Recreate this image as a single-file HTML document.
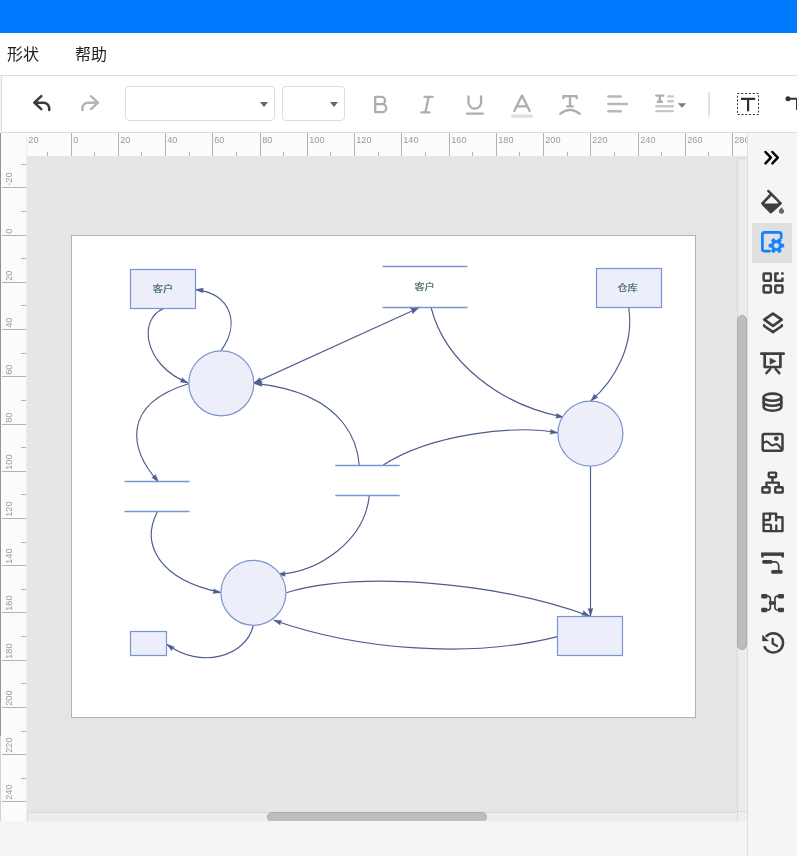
<!DOCTYPE html>
<html lang="zh-CN">
<head>
<meta charset="utf-8">
<title>流程图编辑器</title>
<style>
*{box-sizing:border-box;margin:0;padding:0}
html,body{width:797px;height:856px;overflow:hidden;background:#f5f5f5;font-family:"Liberation Sans","Noto Sans CJK SC",sans-serif}
#app{will-change:transform;position:relative;width:797px;height:856px;overflow:hidden;background:#f5f5f5}
#hdr{position:absolute;left:0;top:0;width:797px;height:33px;background:#007bff}
#menu{position:absolute;left:0;top:33px;width:797px;height:43px;background:#fff;border-bottom:1px solid #dcdcdc}
#menu span{position:absolute;top:9.5px;font-size:16px;line-height:24px;color:#1f1f1f;white-space:nowrap}
#tb{position:absolute;left:1px;top:76px;width:796px;height:57px;background:#fff;border-left:1px solid #dcdcdc;border-bottom:1px solid #dcdcdc}
.sel{position:absolute;top:86px;height:35px;border:1px solid #dcdcdc;border-radius:4px;background:#fff}
.sel i{position:absolute;top:14.5px;width:0;height:0;border-left:4px solid transparent;border-right:4px solid transparent;border-top:5px solid #666}
#tbi{position:absolute;left:0;top:76px;width:797px;height:57px}
#work{position:absolute;left:0;top:133px;width:747px;height:688px;background:#e5e5e5;overflow:hidden}
#hr{position:absolute;left:0;top:0;width:747px;height:23px;background:#fbfbfb;overflow:hidden}
#vr{position:absolute;left:0;top:0;width:27px;border-right:1px solid #f0f0f0;height:688px;background:#fbfbfb;border-left:1px solid #d4d4d4;overflow:hidden}
#vl{position:absolute;left:0;top:0;width:1px;height:603px;background:#939393}
#paper{position:absolute;left:71px;top:102px;width:625px;height:483px;background:#fff;border:1px solid #b3b3b3}
#vs{position:absolute;left:737px;top:25px;width:10px;height:654px;border-top:1px solid #d9d9d9;background:#ececec;border-left:1px solid #d9d9d9;border-bottom:1px solid #d9d9d9}
#cor{position:absolute;left:737px;top:679px;width:10px;height:9px;background:#efefef;border-left:1px solid #d9d9d9}
#vs b{position:absolute;left:-1px;top:156px;width:10px;height:335px;border-radius:5px;background:#bdbdbd;border:1px solid #ababab}
#hs{position:absolute;left:27px;top:679px;width:711px;height:9px;background:#ececec;border-top:1px solid #dadada;border-left:1px solid #dadada}
#hs b{position:absolute;left:239px;top:-1px;width:220px;height:10px;border-radius:5px;background:#bdbdbd;border:1px solid #ababab}
#side{position:absolute;left:747px;top:133px;width:50px;height:723px;background:#f5f5f5;border-left:1px solid #dedede}
#side .act{position:absolute;left:4px;top:90px;width:40px;height:40px;background:#e0e0e0}
svg{position:absolute;left:0;top:0;overflow:hidden}
svg text{font-family:"Liberation Sans","Noto Sans CJK SC",sans-serif}
</style>
</head>
<body>
<div id="app">
<div id="hdr"></div>
<div id="menu"><span style="left:7px">形状</span><span style="left:75px">帮助</span></div>
<div id="tb"></div>
<div class="sel" style="left:125px;width:150px"><i style="left:134px"></i></div>
<div class="sel" style="left:282px;width:63px"><i style="left:47px"></i></div>
<svg id="tbi" width="797" height="57" viewBox="0 76 797 57">

<g fill="none" stroke-linecap="round" stroke-linejoin="round">
<!-- undo -->
<path d="M41.3 96.2 L34.3 102.7 L41.3 109.2 M35 102.7 H43.6 a5.6 5.6 0 0 1 5.6 5.6 V110" stroke="#3b3b3b" stroke-width="2.5"/>
<!-- redo -->
<path d="M91 96.2 L98 102.7 L91 109.2 M97.3 102.7 H88 a5.6 5.6 0 0 0 -5.6 5.6 V110" stroke="#b4b4b4" stroke-width="2.4"/>
<!-- bold -->
<path d="M375.2 96.9 V112.2 M375.2 96.9 H381.4 a3.6 3.6 0 0 1 0 7.3 H375.2 M381.4 104.2 H382.2 a4 4 0 0 1 0 8 H375.2" stroke="#adadad" stroke-width="2.3"/>
<!-- italic -->
<path d="M424.6 96.9 H432.6 M421.4 112.4 H429.4 M428.7 96.9 L425.3 112.4" stroke="#adadad" stroke-width="2.3"/>
<!-- underline -->
<path d="M468.5 96.5 V102.3 a6.3 6.3 0 0 0 12.6 0 V96.5" stroke="#adadad" stroke-width="2.3"/>
<path d="M467 113.6 H483" stroke="#adadad" stroke-width="2.3"/>
<!-- font colour -->
<path d="M514.3 111 L522 95.6 L529.7 111 M517.2 106.4 H526.8" stroke="#adadad" stroke-width="2.3"/>
<path d="M512.7 116.1 H531.3" stroke="#dedede" stroke-width="3.3"/>
<!-- text on arc -->
<path d="M563.3 98.2 V96.2 H576.7 V98.2 M570 96.2 V106.3 M567.2 106.3 H572.8" stroke="#adadad" stroke-width="2.3"/>
<path d="M560.2 113.8 Q570 106 579.8 113.8" stroke="#adadad" stroke-width="2.2"/>
<!-- align -->
<path d="M608.3 96.5 H620.7 M608.3 103.9 H627 M608.3 111.3 H620.7" stroke="#b9b9b9" stroke-width="2.5"/>
<!-- text layout -->
<path d="M656.3 95.6 H663.3 M659.8 95.6 V101.6 M657.8 101.8 H661.8" stroke="#adadad" stroke-width="2.4"/>
<path d="M668.4 96.4 H672.8 M668.4 101.3 H672.8 M656.3 106.3 H672.8 M656.3 111.1 H672.8" stroke="#c6c6c6" stroke-width="2.4"/>
<!-- text box -->
<rect x="737.5" y="93.5" width="21" height="21" stroke="#333" stroke-width="1" stroke-dasharray="2 1.8" stroke-linecap="butt"/>
<path d="M741 98.9 H755.2 M748.1 98.9 V111.2" stroke="#2f2f2f" stroke-width="2.2" stroke-linecap="butt"/>
<!-- connector -->
<path d="M788 98.8 H797 M797 98.8 V110" stroke="#333" stroke-width="2" stroke-linecap="butt"/>
</g>
<circle cx="788" cy="98.8" r="2.5" fill="#333"/>
<path d="M677.8 103.2 H686.2 L682 107.8 Z" fill="#7b7b7b"/>
<rect x="708.3" y="92" width="1.6" height="24.5" fill="#dcdcdc"/>

</svg>
<div id="work">
<div id="paper"></div>
<svg id="dia" width="747" height="688" viewBox="0 133 747 688">
<path d="M419.2 307.2 L412.7 313.8 L412.2 310.4 L410.0 307.8 Z" fill="#4c5c8c" stroke="#4c5c8c" stroke-width="0.5" stroke-linejoin="round"/>
<path d="M163.3 308.6 C137.6 319.6 143.9 365.4 188.1 383" fill="none" stroke="#4c5c8c" stroke-width="1.15"/>
<path d="M188.1 383.0 L180.2 382.0 L181.9 380.2 L182.1 377.8 Z" fill="#4c5c8c" stroke="#4c5c8c" stroke-width="0.5" stroke-linejoin="round"/>
<path d="M221.1 350.6 C240.5 323.8 231.4 293.9 195.6 289.6" fill="none" stroke="#4c5c8c" stroke-width="1.15"/>
<path d="M195.6 289.6 L203.4 288.2 L202.4 290.4 L202.9 292.8 Z" fill="#4c5c8c" stroke="#4c5c8c" stroke-width="0.5" stroke-linejoin="round"/>
<path d="M418.5 308 L254 383" fill="none" stroke="#4c5c8c" stroke-width="1.15"/>
<path d="M254.0 383.0 L260.0 377.8 L260.2 380.2 L261.9 381.9 Z" fill="#4c5c8c" stroke="#4c5c8c" stroke-width="0.5" stroke-linejoin="round"/>
<path d="M431.2 308 C445 362 500 405 563.6 417.2" fill="none" stroke="#4c5c8c" stroke-width="1.15"/>
<path d="M563.6 417.2 L555.7 418.1 L556.9 416.0 L556.5 413.6 Z" fill="#4c5c8c" stroke="#4c5c8c" stroke-width="0.5" stroke-linejoin="round"/>
<path d="M628.7 308 C634.5 345 615 380 590.8 401" fill="none" stroke="#4c5c8c" stroke-width="1.15"/>
<path d="M590.8 401.0 L594.5 394.0 L595.6 396.2 L597.8 397.3 Z" fill="#4c5c8c" stroke="#4c5c8c" stroke-width="0.5" stroke-linejoin="round"/>
<path d="M383.3 465 C433.5 432.7 518.7 425.1 557.8 432.8" fill="none" stroke="#4c5c8c" stroke-width="1.15"/>
<path d="M557.8 432.8 L550.0 434.0 L551.0 431.8 L550.6 429.5 Z" fill="#4c5c8c" stroke="#4c5c8c" stroke-width="0.5" stroke-linejoin="round"/>
<path d="M359.2 465 C358.3 453 353.2 393.5 254.5 383.4" fill="none" stroke="#4c5c8c" stroke-width="1.15"/>
<path d="M254.5 383.4 L262.3 381.8 L261.3 384.0 L261.9 386.4 Z" fill="#4c5c8c" stroke="#4c5c8c" stroke-width="0.5" stroke-linejoin="round"/>
<path d="M188.5 383.8 C120 405 130 450 158.4 481.8" fill="none" stroke="#4c5c8c" stroke-width="1.15"/>
<path d="M158.4 481.8 L151.8 477.5 L154.0 476.6 L155.3 474.5 Z" fill="#4c5c8c" stroke="#4c5c8c" stroke-width="0.5" stroke-linejoin="round"/>
<path d="M157.5 511.6 C140 545 160 580 220.8 592.5" fill="none" stroke="#4c5c8c" stroke-width="1.15"/>
<path d="M220.8 592.5 L212.9 593.4 L214.1 591.3 L213.7 588.9 Z" fill="#4c5c8c" stroke="#4c5c8c" stroke-width="0.5" stroke-linejoin="round"/>
<path d="M369.3 495.4 C365 540 320 572 277.6 574.3" fill="none" stroke="#4c5c8c" stroke-width="1.15"/>
<path d="M277.6 574.3 L285.1 571.7 L284.4 574.1 L285.3 576.3 Z" fill="#4c5c8c" stroke="#4c5c8c" stroke-width="0.5" stroke-linejoin="round"/>
<path d="M253.3 625.5 C246 657 200 669.5 166.8 644.3" fill="none" stroke="#4c5c8c" stroke-width="1.15"/>
<path d="M166.8 644.3 L174.3 646.9 L172.3 648.3 L171.6 650.6 Z" fill="#4c5c8c" stroke="#4c5c8c" stroke-width="0.5" stroke-linejoin="round"/>
<path d="M286.2 592.7 C357.7 570.9 493.2 581.2 589.5 616" fill="none" stroke="#4c5c8c" stroke-width="1.15"/>
<path d="M589.5 616.0 L581.6 615.0 L583.3 613.2 L583.5 610.8 Z" fill="#4c5c8c" stroke="#4c5c8c" stroke-width="0.5" stroke-linejoin="round"/>
<path d="M557.5 636.6 C466.4 659.7 354.2 648.5 273.8 620.2" fill="none" stroke="#4c5c8c" stroke-width="1.15"/>
<path d="M273.8 620.2 L281.7 620.6 L280.2 622.5 L280.2 624.9 Z" fill="#4c5c8c" stroke="#4c5c8c" stroke-width="0.5" stroke-linejoin="round"/>
<path d="M590.5 466.4 L590.5 616" fill="none" stroke="#4c5c8c" stroke-width="1.15"/>
<path d="M590.5 616.0 L588.2 608.4 L590.5 609.2 L592.8 608.4 Z" fill="#4c5c8c" stroke="#4c5c8c" stroke-width="0.5" stroke-linejoin="round"/>
<g fill="#eceff9" stroke="#7c93d1" stroke-width="1.2">
<rect x="130.5" y="269.5" width="65" height="39"/>
<rect x="596.5" y="268.5" width="65" height="39"/>
<rect x="130.5" y="631.5" width="36" height="24"/>
<rect x="557.5" y="616.5" width="65" height="39"/>
<circle cx="221.3" cy="383.3" r="32.5"/>
<circle cx="590.4" cy="433.6" r="32.5"/>
<circle cx="253.4" cy="592.8" r="32.5"/>
</g>
<g fill="none" stroke="#7c93d1" stroke-width="1.3">
<path d="M382.5 266.5 H467.5 M382.5 307.5 H467.5"/>
<path d="M124.5 481.5 H189.5 M124.5 511.5 H189.5"/>
<path d="M335.3 465.5 H399.7 M335.3 495.5 H399.7"/>
</g>
<g font-size="10" fill="#3b6262" stroke="#3b6262" stroke-width="0.2" text-anchor="middle">
<text transform="translate(163 288.9) scale(1.02 0.86)" y="3.8">客户</text>
<text transform="translate(424.6 286.9) scale(1.02 0.86)" y="3.8">客户</text>
<text transform="translate(627.6 287.6) scale(1.02 0.86)" y="3.8">仓库</text>
</g>

</svg>
<div id="hr"><svg width="747" height="23" viewBox="0 133 747 23">
<line x1="23.5" y1="133" x2="23.5" y2="156" stroke="#b2b2b2"/>
<text transform="translate(25.3,143.2) scale(0.96,1)" font-size="9.5" fill="#999999">-20</text>
<line x1="47.5" y1="152" x2="47.5" y2="156" stroke="#b2b2b2"/>
<line x1="71.5" y1="133" x2="71.5" y2="156" stroke="#b2b2b2"/>
<text transform="translate(73.3,143.2) scale(0.96,1)" font-size="9.5" fill="#999999">0</text>
<line x1="94.5" y1="152" x2="94.5" y2="156" stroke="#b2b2b2"/>
<line x1="118.5" y1="133" x2="118.5" y2="156" stroke="#b2b2b2"/>
<text transform="translate(120.3,143.2) scale(0.96,1)" font-size="9.5" fill="#999999">20</text>
<line x1="141.5" y1="152" x2="141.5" y2="156" stroke="#b2b2b2"/>
<line x1="165.5" y1="133" x2="165.5" y2="156" stroke="#b2b2b2"/>
<text transform="translate(167.3,143.2) scale(0.96,1)" font-size="9.5" fill="#999999">40</text>
<line x1="189.5" y1="152" x2="189.5" y2="156" stroke="#b2b2b2"/>
<line x1="212.5" y1="133" x2="212.5" y2="156" stroke="#b2b2b2"/>
<text transform="translate(214.3,143.2) scale(0.96,1)" font-size="9.5" fill="#999999">60</text>
<line x1="236.5" y1="152" x2="236.5" y2="156" stroke="#b2b2b2"/>
<line x1="260.5" y1="133" x2="260.5" y2="156" stroke="#b2b2b2"/>
<text transform="translate(262.3,143.2) scale(0.96,1)" font-size="9.5" fill="#999999">80</text>
<line x1="283.5" y1="152" x2="283.5" y2="156" stroke="#b2b2b2"/>
<line x1="307.5" y1="133" x2="307.5" y2="156" stroke="#b2b2b2"/>
<text transform="translate(309.3,143.2) scale(0.96,1)" font-size="9.5" fill="#999999">100</text>
<line x1="330.5" y1="152" x2="330.5" y2="156" stroke="#b2b2b2"/>
<line x1="354.5" y1="133" x2="354.5" y2="156" stroke="#b2b2b2"/>
<text transform="translate(356.3,143.2) scale(0.96,1)" font-size="9.5" fill="#999999">120</text>
<line x1="378.5" y1="152" x2="378.5" y2="156" stroke="#b2b2b2"/>
<line x1="401.5" y1="133" x2="401.5" y2="156" stroke="#b2b2b2"/>
<text transform="translate(403.3,143.2) scale(0.96,1)" font-size="9.5" fill="#999999">140</text>
<line x1="425.5" y1="152" x2="425.5" y2="156" stroke="#b2b2b2"/>
<line x1="449.5" y1="133" x2="449.5" y2="156" stroke="#b2b2b2"/>
<text transform="translate(451.3,143.2) scale(0.96,1)" font-size="9.5" fill="#999999">160</text>
<line x1="472.5" y1="152" x2="472.5" y2="156" stroke="#b2b2b2"/>
<line x1="496.5" y1="133" x2="496.5" y2="156" stroke="#b2b2b2"/>
<text transform="translate(498.3,143.2) scale(0.96,1)" font-size="9.5" fill="#999999">180</text>
<line x1="519.5" y1="152" x2="519.5" y2="156" stroke="#b2b2b2"/>
<line x1="543.5" y1="133" x2="543.5" y2="156" stroke="#b2b2b2"/>
<text transform="translate(545.3,143.2) scale(0.96,1)" font-size="9.5" fill="#999999">200</text>
<line x1="567.5" y1="152" x2="567.5" y2="156" stroke="#b2b2b2"/>
<line x1="590.5" y1="133" x2="590.5" y2="156" stroke="#b2b2b2"/>
<text transform="translate(592.3,143.2) scale(0.96,1)" font-size="9.5" fill="#999999">220</text>
<line x1="614.5" y1="152" x2="614.5" y2="156" stroke="#b2b2b2"/>
<line x1="638.5" y1="133" x2="638.5" y2="156" stroke="#b2b2b2"/>
<text transform="translate(640.3,143.2) scale(0.96,1)" font-size="9.5" fill="#999999">240</text>
<line x1="661.5" y1="152" x2="661.5" y2="156" stroke="#b2b2b2"/>
<line x1="685.5" y1="133" x2="685.5" y2="156" stroke="#b2b2b2"/>
<text transform="translate(687.3,143.2) scale(0.96,1)" font-size="9.5" fill="#999999">260</text>
<line x1="708.5" y1="152" x2="708.5" y2="156" stroke="#b2b2b2"/>
<line x1="732.5" y1="133" x2="732.5" y2="156" stroke="#b2b2b2"/>
<text transform="translate(734.3,143.2) scale(0.96,1)" font-size="9.5" fill="#999999">280</text>
<line x1="756.5" y1="152" x2="756.5" y2="156" stroke="#b2b2b2"/>
<line x1="779.5" y1="133" x2="779.5" y2="156" stroke="#b2b2b2"/>
<text transform="translate(781.3,143.2) scale(0.96,1)" font-size="9.5" fill="#999999">300</text>
<line x1="803.5" y1="152" x2="803.5" y2="156" stroke="#b2b2b2"/>
</svg></div>
<div id="vr"><svg style="left:-1px" width="27" height="688" viewBox="0 133 27 688">
<line x1="21" y1="164.5" x2="26" y2="164.5" stroke="#b2b2b2"/>
<line x1="2" y1="187.5" x2="26" y2="187.5" stroke="#b2b2b2"/>
<text transform="translate(11.8,185.7) rotate(-90) scale(0.96,1)" font-size="9.5" fill="#999999">-20</text>
<line x1="21" y1="211.5" x2="26" y2="211.5" stroke="#b2b2b2"/>
<line x1="2" y1="235.5" x2="26" y2="235.5" stroke="#b2b2b2"/>
<text transform="translate(11.8,233.7) rotate(-90) scale(0.96,1)" font-size="9.5" fill="#999999">0</text>
<line x1="21" y1="258.5" x2="26" y2="258.5" stroke="#b2b2b2"/>
<line x1="2" y1="282.5" x2="26" y2="282.5" stroke="#b2b2b2"/>
<text transform="translate(11.8,280.7) rotate(-90) scale(0.96,1)" font-size="9.5" fill="#999999">20</text>
<line x1="21" y1="305.5" x2="26" y2="305.5" stroke="#b2b2b2"/>
<line x1="2" y1="329.5" x2="26" y2="329.5" stroke="#b2b2b2"/>
<text transform="translate(11.8,327.7) rotate(-90) scale(0.96,1)" font-size="9.5" fill="#999999">40</text>
<line x1="21" y1="353.5" x2="26" y2="353.5" stroke="#b2b2b2"/>
<line x1="2" y1="376.5" x2="26" y2="376.5" stroke="#b2b2b2"/>
<text transform="translate(11.8,374.7) rotate(-90) scale(0.96,1)" font-size="9.5" fill="#999999">60</text>
<line x1="21" y1="400.5" x2="26" y2="400.5" stroke="#b2b2b2"/>
<line x1="2" y1="424.5" x2="26" y2="424.5" stroke="#b2b2b2"/>
<text transform="translate(11.8,422.7) rotate(-90) scale(0.96,1)" font-size="9.5" fill="#999999">80</text>
<line x1="21" y1="447.5" x2="26" y2="447.5" stroke="#b2b2b2"/>
<line x1="2" y1="471.5" x2="26" y2="471.5" stroke="#b2b2b2"/>
<text transform="translate(11.8,469.7) rotate(-90) scale(0.96,1)" font-size="9.5" fill="#999999">100</text>
<line x1="21" y1="494.5" x2="26" y2="494.5" stroke="#b2b2b2"/>
<line x1="2" y1="518.5" x2="26" y2="518.5" stroke="#b2b2b2"/>
<text transform="translate(11.8,516.7) rotate(-90) scale(0.96,1)" font-size="9.5" fill="#999999">120</text>
<line x1="21" y1="542.5" x2="26" y2="542.5" stroke="#b2b2b2"/>
<line x1="2" y1="565.5" x2="26" y2="565.5" stroke="#b2b2b2"/>
<text transform="translate(11.8,563.7) rotate(-90) scale(0.96,1)" font-size="9.5" fill="#999999">140</text>
<line x1="21" y1="589.5" x2="26" y2="589.5" stroke="#b2b2b2"/>
<line x1="2" y1="612.5" x2="26" y2="612.5" stroke="#b2b2b2"/>
<text transform="translate(11.8,610.7) rotate(-90) scale(0.96,1)" font-size="9.5" fill="#999999">160</text>
<line x1="21" y1="636.5" x2="26" y2="636.5" stroke="#b2b2b2"/>
<line x1="2" y1="660.5" x2="26" y2="660.5" stroke="#b2b2b2"/>
<text transform="translate(11.8,658.7) rotate(-90) scale(0.96,1)" font-size="9.5" fill="#999999">180</text>
<line x1="21" y1="683.5" x2="26" y2="683.5" stroke="#b2b2b2"/>
<line x1="2" y1="707.5" x2="26" y2="707.5" stroke="#b2b2b2"/>
<text transform="translate(11.8,705.7) rotate(-90) scale(0.96,1)" font-size="9.5" fill="#999999">200</text>
<line x1="21" y1="731.5" x2="26" y2="731.5" stroke="#b2b2b2"/>
<line x1="2" y1="754.5" x2="26" y2="754.5" stroke="#b2b2b2"/>
<text transform="translate(11.8,752.7) rotate(-90) scale(0.96,1)" font-size="9.5" fill="#999999">220</text>
<line x1="21" y1="778.5" x2="26" y2="778.5" stroke="#b2b2b2"/>
<line x1="2" y1="801.5" x2="26" y2="801.5" stroke="#b2b2b2"/>
<text transform="translate(11.8,799.7) rotate(-90) scale(0.96,1)" font-size="9.5" fill="#999999">240</text>
<line x1="21" y1="825.5" x2="26" y2="825.5" stroke="#b2b2b2"/>
<line x1="2" y1="849.5" x2="26" y2="849.5" stroke="#b2b2b2"/>
<text transform="translate(11.8,847.7) rotate(-90) scale(0.96,1)" font-size="9.5" fill="#999999">260</text>
<line x1="21" y1="872.5" x2="26" y2="872.5" stroke="#b2b2b2"/>
</svg></div>
<div id="vl"></div>
<div id="vs"><b></b></div>
<div id="hs"><b></b></div>
<div id="cor"></div>
</div>
<div id="side"><div class="act"></div>
<svg id="sic" style="left:-1px" width="50" height="723" viewBox="747 133 50 723">

<g fill="none" stroke-linecap="round" stroke-linejoin="round">
<!-- collapse chevrons -->
<path d="M765.5 152 L770.9 157.7 L765.5 163.3 M772.4 152 L777.8 157.7 L772.4 163.3" stroke="#000" stroke-width="2.5" stroke-linejoin="round"/>
<!-- paint bucket -->
<path d="M770.3 195.2 L762.5 203.4 L770.9 212 L780.2 203.2" stroke="#3f3f3f" stroke-width="2.7"/>
<path d="M768.3 190.9 L780.6 203.4" stroke="#3f3f3f" stroke-width="2.4" stroke-linecap="round"/>
<path d="M763.2 204.7 H779.4 L770.9 212 Z" fill="#3f3f3f" stroke="#3f3f3f" stroke-width="2.2"/>
<!-- style (active) -->
<path d="M781.2 237.8 V234.6 a2.2 2.2 0 0 0 -2.2 -2.2 H764.6 a2.2 2.2 0 0 0 -2.2 2.2 V248.9 a2.2 2.2 0 0 0 2.2 2.2 H769.6" stroke="#0f80ff" stroke-width="2.7"/>
<!-- grid -->
<g stroke="#3f3f3f" stroke-width="2.5">
<rect x="763.65" y="273.45" width="7.2" height="7.2" rx="0.9"/>
<rect x="763.65" y="285.5" width="7.2" height="7" rx="0.9"/>
<rect x="775.35" y="285.5" width="7.1" height="7" rx="0.9"/>
<path d="M778.8 273.45 H775.35 V280.65 H782.45 V277.6" stroke-linecap="butt"/>
</g>
<!-- layers -->
<path d="M773 313.6 L764.3 319.7 L773 325.8 L781.7 319.7 Z" stroke="#3f3f3f" stroke-width="2.7"/>
<path d="M764.2 325.4 V326 L773 332.1 L781.8 326 V325.4" stroke="#3f3f3f" stroke-width="2.6"/>
<!-- presentation -->
<path d="M761.3 353.7 H783.7" stroke="#3f3f3f" stroke-width="2.7"/>
<path d="M764.7 354 V367 H780.4 V354" stroke="#3f3f3f" stroke-width="2.7"/>
<path d="M770.2 369 L766.4 373.2 M775.6 369 L779.3 373.2" stroke="#3f3f3f" stroke-width="2.5"/>
<!-- database -->
<g stroke="#3f3f3f" stroke-width="2.6">
<ellipse cx="772.5" cy="397.2" rx="8.8" ry="3.6"/>
<path d="M763.7 397.2 V407.1 a8.8 3.6 0 0 0 17.6 0 V397.2"/>
<path d="M763.7 402.2 a8.8 3.6 0 0 0 17.6 0"/>
</g>
<!-- image -->
<rect x="762.7" y="433.9" width="19.8" height="16.8" rx="1.8" stroke="#3f3f3f" stroke-width="2.5"/>
<path d="M763.4 443 Q766.8 440 769.6 443.6 Q772 446.6 775.2 444.4 Q777.6 443 781.8 449.6" stroke="#3f3f3f" stroke-width="2.1"/>
<!-- org chart -->
<g stroke="#3f3f3f" stroke-width="2.4" stroke-linejoin="round">
<rect x="768.8" y="472.6" width="7.3" height="4.6" rx="0.6"/>
<rect x="762.4" y="487.2" width="7.2" height="5.3" rx="0.6"/>
<rect x="775.2" y="487.2" width="7.5" height="5.3" rx="0.6"/>
<path d="M772.5 478 V482.6 M766.5 485.8 V482.6 H778.7 V485.8" stroke-width="2.4"/>
</g>
<!-- connector -->
<path d="M762.4 557.6 V554.1 H782.7 V557.6" stroke="#3f3f3f" stroke-width="2.4" stroke-linejoin="miter" stroke-linecap="butt"/>
<path d="M761.2 554.1 H783.9" stroke="#3f3f3f" stroke-width="3.4" stroke-linecap="butt"/>
<path d="M770 561.9 H774.9 a3.8 3.8 0 0 1 3.8 3.8 V571" stroke="#3f3f3f" stroke-width="1.7"/>
<!-- graph -->
<path d="M766 596.2 H767.8 a2.6 2.6 0 0 1 2.6 2.6 V603 M779 596.2 H777.5 a2.6 2.6 0 0 0 -2.6 2.6 V603 M766 610 H767.8 a2.6 2.6 0 0 0 2.6 -2.6 V603 M779 610 H777.5 a2.6 2.6 0 0 1 -2.6 -2.6 V603" stroke="#3f3f3f" stroke-width="1.7"/>
<!-- history -->
<path d="M764.2 646.1 A9.7 9.7 0 1 0 765.9 636.6" stroke="#3f3f3f" stroke-width="2.5" stroke-linecap="butt"/>
<path d="M772.7 638.9 V643.6 L777 646" stroke="#3f3f3f" stroke-width="2.3"/>
</g>
<path d="M781.5 207.2 C782.6 208.6 784.1 210 784.1 211.1 a2.6 2.6 0 0 1 -5.2 0 C778.9 210 780.4 208.6 781.5 207.2 Z" fill="#666"/>
<path d="M781.25 244.02 L783.75 244.12 L783.75 247.08 L781.25 247.18 L780.19 249.01 L781.36 251.23 L778.79 252.71 L777.46 250.59 L775.34 250.59 L774.01 252.71 L771.44 251.23 L772.61 249.01 L771.55 247.18 L769.05 247.08 L769.05 244.12 L771.55 244.02 L772.61 242.19 L771.44 239.97 L774.01 238.49 L775.34 240.61 L777.46 240.61 L778.79 238.49 L781.36 239.97 L780.19 242.19 Z M773.50 245.60 a2.9 2.9 0 1 0 5.8 0 a2.9 2.9 0 1 0 -5.8 0 Z" fill="#0f80ff" fill-rule="evenodd" stroke="#0f80ff" stroke-width="0.7" stroke-linejoin="round"/>
<rect x="781.1" y="272.3" width="2.6" height="2.4" rx="0.4" fill="#3f3f3f"/>
<path d="M770 358.2 V364.2 L776.2 361.2 Z" fill="#3f3f3f" stroke="#3f3f3f" stroke-width="0.6" stroke-linejoin="round"/>
<circle cx="776.3" cy="438.6" r="2.4" fill="#3f3f3f"/>
<path d="M762.5 635 V640.9 H768.4 Z" fill="#3f3f3f" stroke="#3f3f3f" stroke-width="0.5" stroke-linejoin="round"/>
<!-- floor plan -->
<g fill="none" stroke="#3f3f3f" stroke-width="2.4" stroke-linejoin="round" stroke-linecap="round">
<path d="M763.6 513.6 H776.1 V517.2 H782.5 V531.1 H763.6 Z"/>
<path d="M770 513.6 V519 a1 1 0 0 1 -1 1 H763.6 M776.1 517.2 V520.6 M763.6 524.7 H770 a1 1 0 0 1 1 1 V531.1 M776.3 525.4 V531.1" stroke-width="2.3"/>
</g>
<!-- node blocks -->
<g fill="#3f3f3f">
<rect x="762.3" y="560.1" width="10" height="3.7" rx="1.2"/>
<rect x="771.3" y="570.1" width="11.2" height="3.7" rx="1.2"/>
<rect x="761.2" y="594.1" width="6.2" height="4.3" rx="1.1"/>
<rect x="777.9" y="594.1" width="6.1" height="4.3" rx="1.1"/>
<rect x="761.2" y="607.8" width="6.2" height="4.4" rx="1.1"/>
<rect x="777.9" y="607.8" width="6.1" height="4.4" rx="1.1"/>
<rect x="768.9" y="601.3" width="7" height="3.5" rx="1"/>
</g>

</svg>
</div>
</div>
</body>
</html>
